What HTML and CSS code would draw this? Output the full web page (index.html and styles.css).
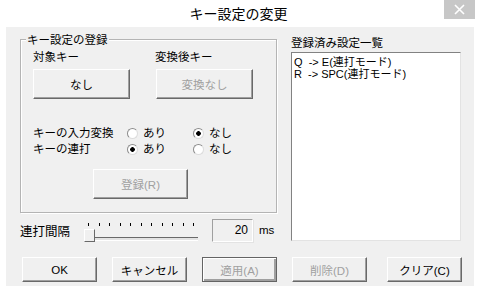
FILE: index.html
```html
<!DOCTYPE html>
<html lang="ja">
<head>
    <meta charset="UTF-8">
    <meta name="viewport" content="width=device-width, initial-scale=1.0">
    <title>キー設定の変更</title>
    <link rel="stylesheet" href="styles.css">
</head>
<body>
    <div class="window">
        <div class="titlebar">
            <span></span>
            <span class="title">キー設定の変更</span>
            <span class="close">
                <svg width="11" height="11" viewBox="0 0 11 11"><path d="M1 1 L10 10 M10 1 L1 10" stroke="#fff" stroke-width="1.6" fill="none"/></svg>
            </span>
        </div>
        <div class="client">
            <div class="main">
                <div class="left">
                    <div class="group">
                        <div class="group-title">キー設定の登録</div>
                        <div class="key-labels"><span>対象キー</span><span>変換後キー</span></div>
                        <div class="key-buttons">
                            <button class="btn key">なし</button>
                            <button class="btn key" disabled>変換なし</button>
                        </div>
                        <div class="radio-row">
                            <span>キーの入力変換</span>
                            <label class="radio"><i class="dot"></i>あり</label>
                            <label class="radio"><i class="dot checked"></i>なし</label>
                        </div>
                        <div class="radio-row">
                            <span>キーの連打</span>
                            <label class="radio"><i class="dot checked"></i>あり</label>
                            <label class="radio"><i class="dot"></i>なし</label>
                        </div>
                        <button class="btn register" disabled>登録(R)</button>
                    </div>
                    <div class="interval">
                        <span class="interval-label">連打間隔</span>
                        <div class="slider">
                            <div class="ticks">
                                <i></i><i></i><i></i><i></i><i></i><i></i><i></i><i></i><i></i><i></i><i></i>
                            </div>
                            <div class="track"></div>
                            <div class="thumb"></div>
                        </div>
                        <div class="num">20</div>
                        <span class="unit">ms</span>
                    </div>
                </div>
                <div class="right">
                    <div class="list-label">登録済み設定一覧</div>
                    <ul class="list">
                        <li>Q&nbsp;&nbsp;-&gt; E(連打モード)</li>
                        <li>R&nbsp;&nbsp;-&gt; SPC(連打モード)</li>
                    </ul>
                </div>
            </div>
            <div class="actions">
                <button class="btn action">OK</button>
                <button class="btn action">キャンセル</button>
                <button class="btn action default" disabled>適用(A)</button>
                <button class="btn action" disabled>削除(D)</button>
                <button class="btn action last">クリア(C)</button>
            </div>
        </div>
    </div>
</body>
</html>
```

FILE: styles.css
```css
* {
    box-sizing: border-box;
}

body {
    margin: 0;
    padding: 0;
    background-color: #ffffff;
    font-family: "Liberation Sans", "Noto Sans CJK JP", sans-serif;
    font-size: 11.5px;
    color: #000000;
}

.window {
    width: 477px;
    height: 292px;
    background-color: #ffffff;
}

.titlebar {
    display: grid;
    grid-template-columns: 1fr auto 1fr;
    height: 27px;
}

.title {
    font-family: "Noto Sans CJK JP", sans-serif;
    font-size: 14px;
    line-height: 27px;
    padding-top: 0;
}

.close {
    justify-self: end;
    display: flex;
    justify-content: center;
    align-items: center;
    width: 31px;
    height: 19px;
    margin-right: 2px;
    background-color: #c7c7c7;
}

.client {
    margin: 0 3px 0 6px;
    height: 259px;
    background-color: #f0f0f0;
}

.main {
    display: flex;
    height: 230px;
}

.left {
    width: 257px;
    margin-left: 14px;
}

.group {
    margin-top: 12px;
    height: 174px;
    border: 1px solid #b4b4b4;
    box-shadow: 1px 1px 0 #ffffff, inset 1px 1px 0 #ffffff;
    padding: 0 12px;
}

.group-title {
    width: fit-content;
    margin: -6px 0 0 -7px;
    padding: 0 1px;
    line-height: 12px;
    background-color: #f0f0f0;
}

.key-labels {
    display: grid;
    grid-template-columns: 97px 97px;
    column-gap: 25px;
    margin-top: 5px;
    line-height: 12px;
}

.key-buttons {
    display: flex;
    gap: 26px;
    margin-top: 6px;
}

.btn {
    font: inherit;
    color: #000000;
    background-color: #f0f0f0;
    border: 1px solid;
    border-color: #ffffff #696969 #696969 #ffffff;
    box-shadow: inset -1px -1px 0 #a0a0a0;
    padding: 0;
}

.btn:disabled {
    color: #a0a0a0;
}

.key {
    width: 97px;
    height: 30px;
}

.radio-row {
    display: grid;
    grid-template-columns: 94px 66px auto;
    height: 16px;
    line-height: 16px;
}

.radio-row:first-of-type,
.key-buttons + .radio-row {
    margin-top: 26px;
}

.radio {
    display: flex;
    align-items: center;
    gap: 5px;
}

.dot {
    display: inline-block;
    width: 11px;
    height: 11px;
    border-radius: 50%;
    border: 1px solid;
    border-color: #8c8c8c #dcdcdc #dcdcdc #8c8c8c;
    background-color: #ffffff;
}

.dot.checked {
    background: radial-gradient(circle, #000000 2px, #ffffff 2.6px);
}

.register {
    display: block;
    width: 95px;
    height: 30px;
    margin: 12px 0 0 60px;
}

.interval {
    display: flex;
    align-items: center;
    margin-top: 5px;
    height: 24px;
}

.interval-label {
    width: 63px;
    font-family: "Noto Sans CJK JP", sans-serif;
    font-size: 12.5px;
}

.slider {
    position: relative;
    width: 115px;
    height: 24px;
}

.ticks {
    display: flex;
    justify-content: space-between;
    padding: 0 4px 0 5px;
    margin-top: 5px;
    height: 3px;
}

.ticks i {
    width: 1px;
    height: 3px;
    background-color: #000000;
}

.track {
    margin: 11px 0 0 2px;
    height: 4px;
    border-top: 1px solid #696969;
    border-left: 1px solid #a0a0a0;
    border-bottom: 1px solid #ffffff;
    background-color: #e3e3e3;
}

.thumb {
    position: absolute;
    left: 1px;
    top: 11px;
    width: 11px;
    height: 13px;
    background-color: #f0f0f0;
    border: 1px solid;
    border-color: #ffffff #696969 #696969 #ffffff;
}

.num {
    width: 41px;
    height: 23px;
    margin-left: 14px;
    border: 1px solid;
    border-color: #a0a0a0 #ffffff #ffffff #a0a0a0;
    box-shadow: 1px 1px 0 #e3e3e3;
    text-align: right;
    padding-right: 4px;
    line-height: 21px;
    font-size: 12px;
}

.unit {
    margin-left: 6px;
    font-size: 11.5px;
}

.right {
    width: 170px;
    margin-left: 14px;
}

.list-label {
    margin-top: 10px;
    line-height: 12px;
}

.list {
    list-style: none;
    margin: 3px 0 0 0;
    padding: 3px 0 0 2px;
    height: 189px;
    background-color: #ffffff;
    border: 1px solid;
    border-color: #828282 #e3e3e3 #e3e3e3 #828282;
}

.list li {
    line-height: 12px;
    font-size: 11px;
}

.actions {
    display: flex;
    gap: 15px;
    margin-left: 16px;
}

.action {
    width: 75px;
    height: 25px;
}

.action.default {
    border: 1px solid #646464;
    box-shadow: inset 1px 1px 0 #ffffff, inset -2px -2px 0 #a0a0a0;
}

.action.last {
    margin-left: 5px;
}
```
